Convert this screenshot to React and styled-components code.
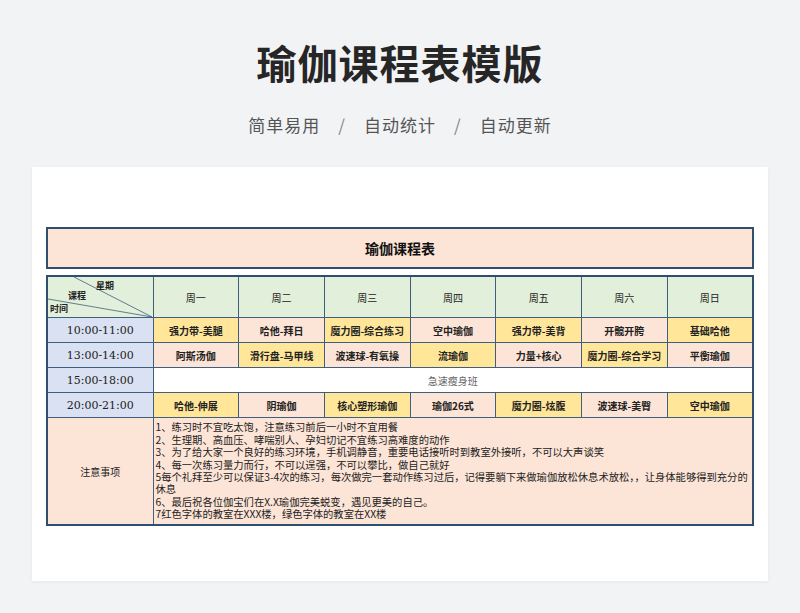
import React from 'react';
import styled, { createGlobalStyle } from 'styled-components';

const GlobalStyle = createGlobalStyle`
  html, body { margin: 0; padding: 0; background: #f2f3f5; }
  body { font-family: "Noto Sans CJK SC", "Noto Sans", sans-serif; }
`;

const C = { g: '#e2efda', b: '#d9e1f2', p: '#fce4d6', y: '#ffe699', w: '#ffffff' };

const days = ['周一', '周二', '周三', '周四', '周五', '周六', '周日'];
const rows = [
  { time: '10:00-11:00', start: 'y', items: ['强力带-美腿', '哈他-拜日', '魔力圈-综合练习', '空中瑜伽', '强力带-美背', '开髋开胯', '基础哈他'] },
  { time: '13:00-14:00', start: 'p', items: ['阿斯汤伽', '滑行盘-马甲线', '波速球-有氧操', '流瑜伽', '力量+核心', '魔力圈-综合学习', '平衡瑜伽'] },
  { time: '15:00-18:00', span: '急速瘦身班' },
  { time: '20:00-21:00', start: 'y', items: ['哈他-伸展', '阴瑜伽', '核心塑形瑜伽', '瑜伽26式', '魔力圈-炫腹', '波速球-美臀', '空中瑜伽'] },
];
const notes = [
  '1、练习时不宜吃太饱，注意练习前后一小时不宜用餐',
  '2、生理期、高血压、哮喘别人、孕妇切记不宜练习高难度的动作',
  '3、为了给大家一个良好的练习环境，手机调静音，重要电话接听时到教室外接听，不可以大声谈笑',
  '4、每一次练习量力而行，不可以逞强，不可以攀比，做自己就好',
  '5每个礼拜至少可以保证3-4次的练习，每次做完一套动作练习过后，记得要躺下来做瑜伽放松休息术放松，，让身体能够得到充分的休息',
  '6、最后祝各位伽宝们在X.X瑜伽完美蜕变，遇见更美的自己。',
  '7红色字体的教室在XXX楼，绿色字体的教室在XX楼',
];

const Page = styled.div`
  width: 800px;
  height: 613px;
  display: flex;
  flex-direction: column;
  align-items: center;
  box-sizing: border-box;
  padding-top: 36px;
`;
const Title = styled.h1`
  margin: 0;
  font-size: 40px;
  font-weight: 700;
  color: #262626;
  letter-spacing: 1px;
  line-height: 52px;
`;
const Sub = styled.div`
  margin-top: 24px;
  display: flex;
  gap: 18px;
  font-size: 17px;
  color: #555;
  letter-spacing: 1px;
`;
const Slash = styled.span`color: #888;`;
const Card = styled.div`
  margin-top: 30px;
  width: 736px;
  height: 414px;
  background: #fff;
  box-sizing: border-box;
  padding: 60px 14px 0;
  box-shadow: 0 1px 4px rgba(0,0,0,0.05);
`;
const Banner = styled.div`
  height: 38px;
  background: ${C.p};
  border: 2px solid #2f4f6f;
  display: flex;
  align-items: center;
  justify-content: center;
  font-size: 14px;
  font-weight: 600;
  color: #111;
  margin-bottom: 6px;
`;
const Table = styled.table`
  width: 708px;
  border-collapse: collapse;
  table-layout: fixed;
  border: 2px solid #2f4f6f;
  font-size: 10px;
  color: #222;
`;
const Td = styled.td`
  border: 1px solid #3f5f7f;
  background: ${p => C[p.$c]};
  text-align: ${p => p.$left ? 'left' : 'center'};
  height: ${p => p.$h || 24}px;
  padding: 0 2px;
  white-space: nowrap;
  font-weight: ${p => p.$bold ? 600 : 400};
  color: ${p => p.$muted ? '#666' : '#222'};
`;
const TimeTd = styled(Td)`
  font-size: 11px;
  font-family: "DejaVu Serif", "Noto Sans CJK SC", serif;
`;
const Diag = styled.td`
  border: 1px solid #3f5f7f;
  background: ${C.g};
  height: 40px;
  padding: 0;
  position: relative;
  font-size: 9px;
`;
const DiagLabel = styled.span`
  position: absolute;
  left: ${p => p.$l}px;
  top: ${p => p.$t}px;
  font-weight: 600;
`;
const Notes = styled.td`
  border: 1px solid #3f5f7f;
  background: ${C.p};
  padding: 2px 2px;
  font-size: 10.3px;
  line-height: 12.4px;
  text-align: left;
  white-space: normal;
`;

const alt = (start, i) => (i % 2 === 0 ? start : start === 'y' ? 'p' : 'y');

export default function App() {
  return (
    <>
      <GlobalStyle />
      <Page>
        <Title>瑜伽课程表模版</Title>
        <Sub>
          <span>简单易用</span><Slash>/</Slash><span>自动统计</span><Slash>/</Slash><span>自动更新</span>
        </Sub>
        <Card>
          <Banner>瑜伽课程表</Banner>
          <Table>
            <colgroup>
              <col style={{ width: 106 }} />
              {days.map(d => <col key={d} />)}
            </colgroup>
            <tbody>
              <tr>
                <Diag>
                  <svg width="104" height="40" style={{ position: 'absolute', left: 0, top: 0 }}>
                    <line x1="26" y1="0" x2="104" y2="40" stroke="#3f5f7f" strokeWidth="0.8" />
                    <line x1="0" y1="22" x2="104" y2="40" stroke="#3f5f7f" strokeWidth="0.8" />
                  </svg>
                  <DiagLabel $l={48} $t={2}>星期</DiagLabel>
                  <DiagLabel $l={20} $t={12}>课程</DiagLabel>
                  <DiagLabel $l={2} $t={25}>时间</DiagLabel>
                </Diag>
                {days.map(d => <Td key={d} $c="g" $h={40}>{d}</Td>)}
              </tr>
              {rows.map(r => (
                <tr key={r.time}>
                  <TimeTd $c="b">{r.time}</TimeTd>
                  {r.span
                    ? <Td $c="w" colSpan={7} $muted>{r.span}</Td>
                    : r.items.map((it, i) => <Td key={i} $c={alt(r.start, i)} $bold>{it}</Td>)}
                </tr>
              ))}
              <tr>
                <Td $c="p" $h={106}>注意事项</Td>
                <Notes colSpan={7}>
                  {notes.map(n => <div key={n}>{n}</div>)}
                </Notes>
              </tr>
            </tbody>
          </Table>
        </Card>
      </Page>
    </>
  );
}
